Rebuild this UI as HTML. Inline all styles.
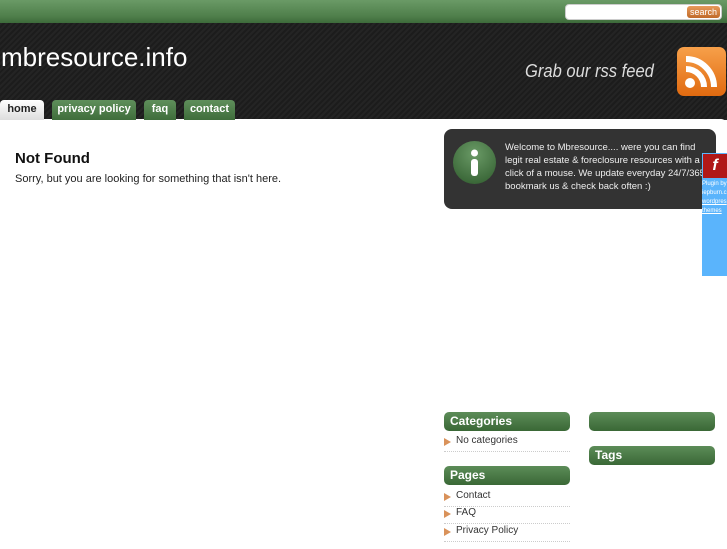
<!DOCTYPE html>
<html><head><meta charset="utf-8"><style>
*{margin:0;padding:0;box-sizing:border-box}
body{width:727px;height:545px;overflow:hidden;background:#fff;font-family:"Liberation Sans",sans-serif;position:relative}
.top{position:absolute;left:0;top:0;width:727px;height:23px;background:linear-gradient(#6a9a66,#4f7f4b 70%,#3d6a3a)}
.srch{position:absolute;left:565px;top:4px;width:157px;height:16px;background:#fff;border-radius:4px;border:1px solid #ccc}
.srch span{position:absolute;right:1px;top:1px;width:33px;height:12px;background:linear-gradient(#e79a5a,#c06a2a);border-radius:3px;color:#fff;font-size:9px;line-height:12px;text-align:center}
.hdr{position:absolute;left:0;top:23px;width:727px;height:97px;background:repeating-linear-gradient(135deg,#242424 0 2px,#1c1c1c 2px 4px)}
.title{position:absolute;left:1px;top:42px;color:#fff;font-size:26px}
.grab{position:absolute;left:525px;top:61px;color:#ddd;font-size:18px;font-style:italic;transform:scaleX(.92);transform-origin:left}
.rss{position:absolute;left:677px;top:47px;width:49px;height:49px;border-radius:7px;background:linear-gradient(#f7a04a,#e06a10)}
.tab{position:absolute;top:100px;height:20px;border-radius:4px 4px 0 0;font-size:11px;font-weight:bold;color:#fff;line-height:19px;text-align:center;background:linear-gradient(#5f8f5b,#3f6d3b)}
.main{position:absolute;left:0;top:119px;width:727px;height:430px;background:#fff;border-radius:0 6px 0 0}
h2{position:absolute;left:15px;top:150px;font-size:15px;color:#111}
.p{position:absolute;left:15px;top:173px;font-size:11px;color:#222}
.info{position:absolute;left:444px;top:129px;width:272px;height:80px;background:#333;border-radius:8px}
.info .i{position:absolute;left:9px;top:12px;width:43px;height:43px;border-radius:50%;background:radial-gradient(circle at 50% 30%,#6a9a66,#2e5a2c)}
.info .t{position:absolute;left:61px;top:12px;font-size:9.5px;color:#eee;line-height:13px;width:205px}
.flash{position:absolute;left:702px;top:153px;width:25px;height:123px;background:#5ab4fc}
.flash b{position:absolute;left:1px;top:1px;width:24px;height:24px;background:#b01818;color:#fff;font-style:italic;font-size:16px;text-align:center;line-height:24px}
.flash i{position:absolute;left:0;top:27px;font-style:normal;font-size:6px;color:#fff;line-height:9px;width:25px;overflow:hidden;white-space:nowrap}
.wh{position:absolute;height:19px;border-radius:5px;background:linear-gradient(#5c8c58,#3a6836);color:#fff;font-size:12px;font-weight:bold;padding-left:6px;line-height:18px}
.li{position:absolute;left:444px;width:126px;height:18px;border-bottom:1px dotted #ccc;font-size:10px;color:#333;padding-left:12px;padding-top:1px}
.li:before{content:"";position:absolute;left:0;top:4px;border-left:7px solid #d9925a;border-top:4px solid transparent;border-bottom:4px solid transparent}
</style></head><body>
<div class="top"></div>
<div class="srch"><span>search</span></div>
<div class="hdr"></div>
<div class="title">mbresource.info</div>
<div class="grab">Grab our rss feed</div>
<div class="rss"><svg width="49" height="49"><circle cx="13" cy="36" r="5" fill="#fff"/><path d="M9 22a18 18 0 0 1 18 18M9 12a28 28 0 0 1 28 28" stroke="#fff" stroke-width="6" fill="none"/></svg></div>
<div class="main"></div>
<div class="tab" style="left:0;width:44px;background:linear-gradient(#fff,#ddd);color:#222">home</div>
<div class="tab" style="left:52px;width:84px">privacy policy</div>
<div class="tab" style="left:144px;width:32px">faq</div>
<div class="tab" style="left:184px;width:51px">contact</div>
<h2>Not Found</h2>
<div class="p">Sorry, but you are looking for something that isn't here.</div>
<div class="info"><div class="i"><svg width="43" height="43"><circle cx="21.5" cy="12" r="3.5" fill="#fff"/><rect x="18" y="18" width="7" height="17" rx="3" fill="#fff"/></svg></div><div class="t">Welcome to Mbresource.... were you can find legit real estate &amp; foreclosure resources with a click of a mouse. We update everyday 24/7/365 bookmark us &amp; check back often :)</div></div>
<div class="flash"><b>f</b><i>Plugin by<br>iepburn.c<br><u>wordpres</u><br><u>themes</u></i></div>
<div class="wh" style="left:444px;top:412px;width:126px">Categories</div>
<div class="li" style="top:434px">No categories</div>
<div class="wh" style="left:444px;top:466px;width:126px">Pages</div>
<div class="li" style="top:489px">Contact</div>
<div class="li" style="top:506px">FAQ</div>
<div class="li" style="top:524px">Privacy Policy</div>
<div class="wh" style="left:589px;top:412px;width:126px"></div>
<div class="wh" style="left:589px;top:446px;width:126px">Tags</div>
</body></html>
